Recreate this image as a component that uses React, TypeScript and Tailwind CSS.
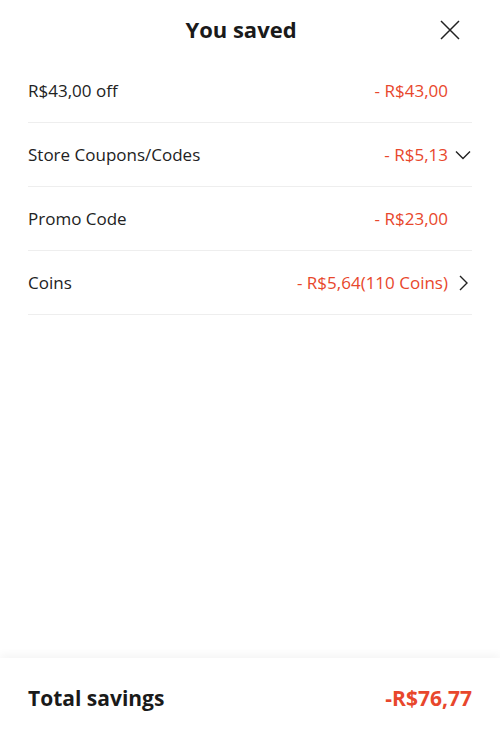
import React from "react";

const rows = [
  { label: "R$43,00 off", value: "- R$43,00", icon: null },
  { label: "Store Coupons/Codes", value: "- R$5,13", icon: "down" },
  { label: "Promo Code", value: "- R$23,00", icon: null },
  { label: "Coins", value: "- R$5,64(110 Coins)", icon: "right" },
];

function Chevron({ dir }: { dir: string | null }) {
  if (!dir) return <span className="w-6" />;
  return (
    <span className="w-6 flex justify-end">
      {dir === "down" ? (
        <svg width="18" height="18" viewBox="0 0 18 18" fill="none" stroke="#222" strokeWidth="1.4">
          <path d="M2 5.5l7 7 7-7" />
        </svg>
      ) : (
        <svg width="18" height="18" viewBox="0 0 18 18" fill="none" stroke="#222" strokeWidth="1.4">
          <path d="M6 2l7 7-7 7" />
        </svg>
      )}
    </span>
  );
}

export default function App() {
  return (
    <div className="h-[740px] w-[500px] bg-white flex flex-col font-['Open_Sans',sans-serif] text-[#222]">
      <div className="relative h-[59px] flex items-center justify-center">
        <h1 className="text-[22px] font-bold text-[#1a1a1a] -ml-[18px]">You saved</h1>
        <button className="absolute right-[40px] top-[20px]">
          <svg width="20" height="20" viewBox="0 0 20 20" stroke="#222" strokeWidth="1.5">
            <path d="M1 1l18 18M19 1L1 19" />
          </svg>
        </button>
      </div>
      <div className="px-7 flex-1">
        {rows.map((r) => (
          <div key={r.label} className="h-16 pt-px flex items-center justify-between border-b border-[#eeeeee] text-[17px] font-medium">
            <span className="text-[#222]">{r.label}</span>
            <span className="flex items-center">
              <span className="text-[#e8472c]">{r.value}</span>
              <Chevron dir={r.icon} />
            </span>
          </div>
        ))}
      </div>
      <div className="h-[82px] px-7 flex items-center justify-between shadow-[0_-4px_8px_rgba(0,0,0,0.04)]">
        <span className="text-[21px] font-bold text-[#1a1a1a]">Total savings</span>
        <span className="text-[21px] font-bold text-[#e8472c]">-R$76,77</span>
      </div>
    </div>
  );
}
